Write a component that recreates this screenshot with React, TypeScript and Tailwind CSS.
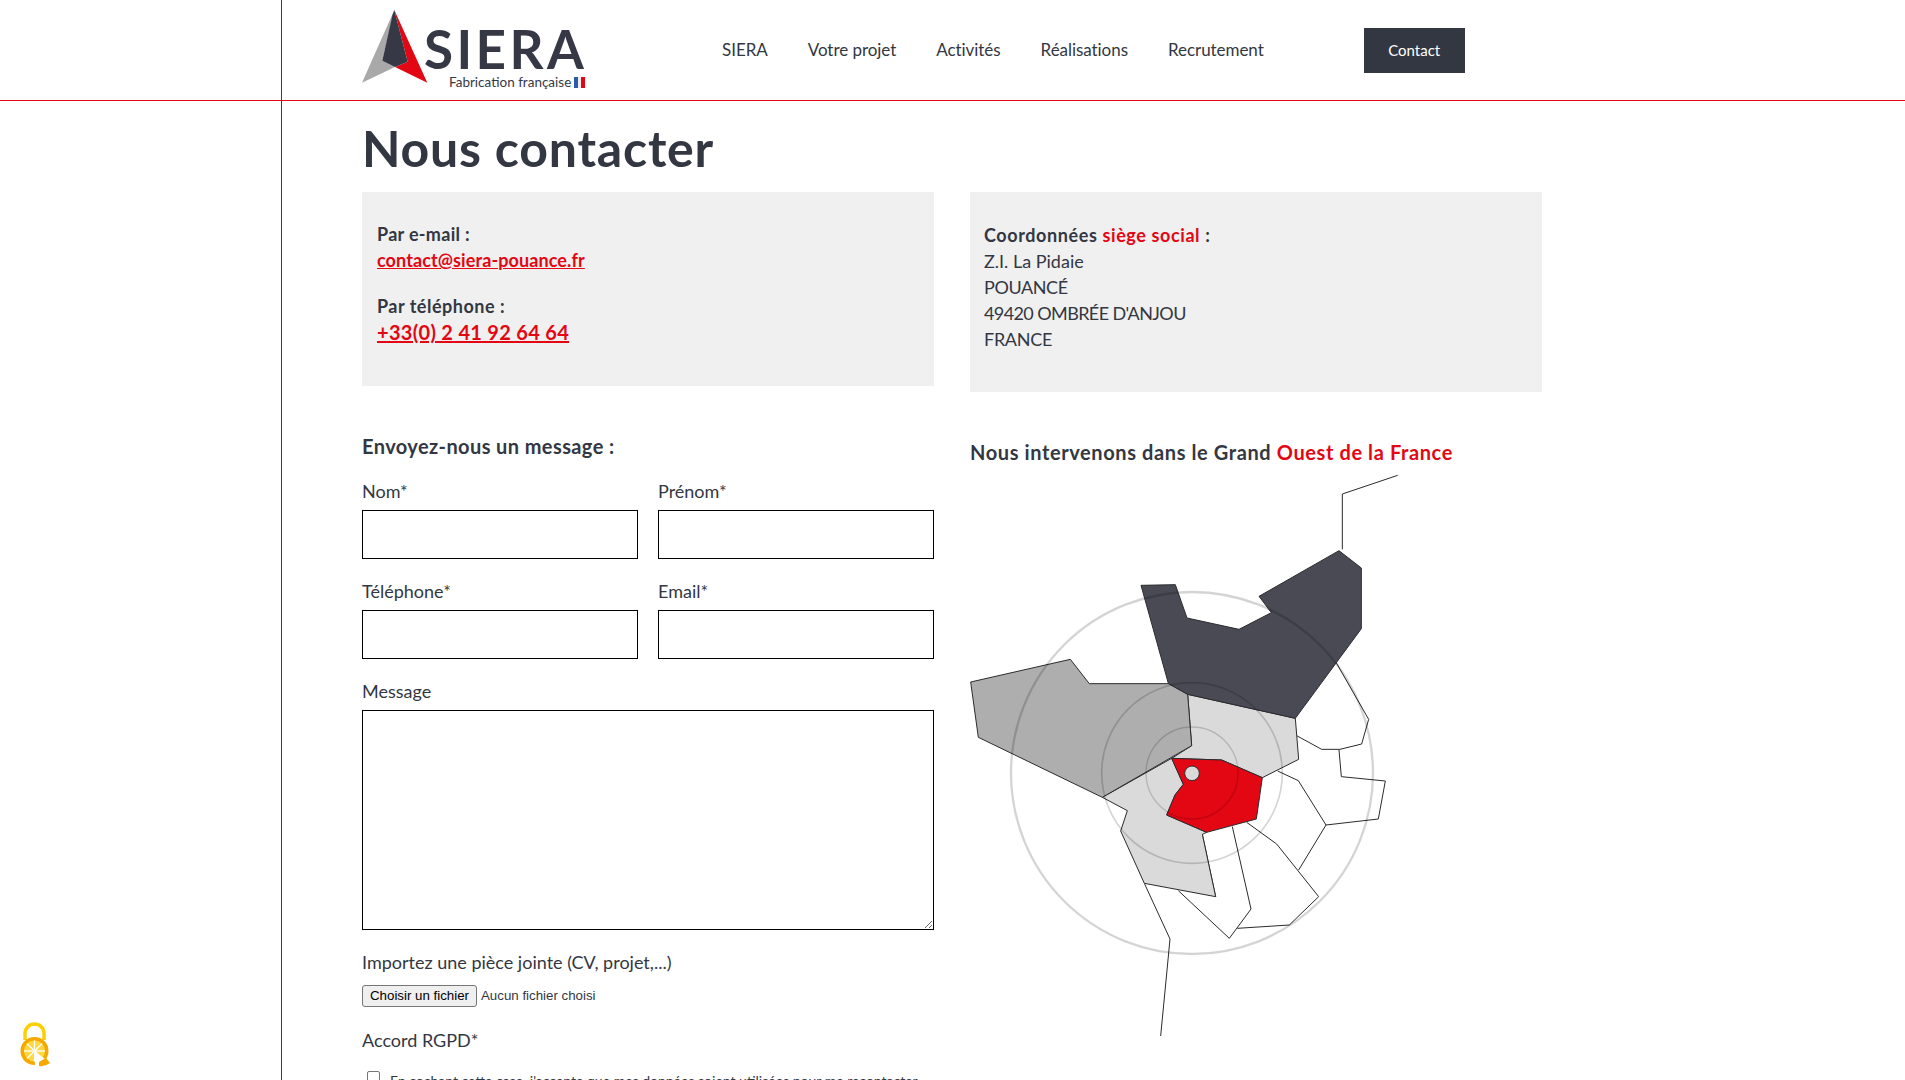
const font = "font-['Lato','Liberation_Sans',sans-serif]";

const inputCls = "block w-full border border-black bg-white";

function Logo() {
  return (
    <div className="relative h-[100px] w-[240px] shrink-0">
      <svg className="absolute left-0 top-0" width="70" height="90" viewBox="0 0 70 90">
        <polygon points="32.3,10 0,82.7 33,67 20.3,60.7" fill="#a9a9a9" />
        <polygon points="32.3,10 65.3,82.7 33,67 45.7,61.7" fill="#e30613" />
        <polygon points="30.5,15 20.3,60.7 33,67 45.7,61.7 32.3,10" fill="#363945" />
      </svg>
      <span className="absolute left-[62px] top-[29px] text-[53px] leading-[40px] font-bold tracking-[3.4px] text-[#363945]">SIERA</span>
      <span className="absolute left-[87px] top-[74px] text-[13.5px] leading-[17px] text-[#363945] whitespace-nowrap">Fabrication française</span>
      <span className="absolute left-[212px] top-[77px] flex h-[11px] w-[11px]">
        <span className="flex-1 bg-[#2a5caa]" />
        <span className="flex-1 bg-[#eeeeee]" />
        <span className="flex-1 bg-[#e30613]" />
      </span>
    </div>
  );
}

function Field({ label }: { label: string }) {
  return (
    <div className="flex-1">
      <label className="mb-[4px] block text-[18px] leading-[30px]">{label}</label>
      <input type="text" className={`${inputCls} h-[49px]`} />
    </div>
  );
}

const nav = ["SIERA", "Votre projet", "Activités", "Réalisations", "Recrutement"];

function FranceMap() {
  return (
    <svg className="block" width="440" height="580" viewBox="30 30 1320 1740" fill="none">
      <g stroke="#2b2b2f" strokeWidth="3">
        <polyline points="1127,605 1226,778 1205,852 1140,868 1085,868 1010,827" />
        <polyline points="1137,870 1144,950 1276,963 1255,1077 1098,1095 1015,962 953,933" />
        <polyline points="1098,1095 1016,1230" />
        <polyline points="860,1087 950,1152 1076,1310 988,1395 832,1405" />
        <polyline points="817,1100 873,1347 808,1435 655,1292" />
        <polyline points="727,1123 767,1310" />
        <polyline points="553,1270 630,1437 602,1728" />
        <polyline points="1147,268 1147,102 1313,46" />
        <polygon fill="#dadada" points="683,703 1006,775 1016,898 907,953 785,900 635,895 695,857" />
        <polygon fill="#dadada" points="635,895 670,973 645,1005 620,1065 740,1117 727,1123 767,1310 553,1270 482,1113 502,1052 427,1012" />
        <polygon fill="#aeaeae" points="32,666 331,598 388,671 625,671 683,703 695,857 427,1012 55,832" />
        <polygon fill="#4a4a55" points="543,376 646,374 681,474 837,508 934,458 897,409 1137,272 1204,324 1204,506 1006,775 683,703 625,670" />
        <polygon fill="#e30613" points="635,895 785,900 907,953 889,1077 740,1117 620,1065 645,1005 670,973" />
        <circle cx="696" cy="940" r="22" fill="#dadada" />
      </g>
      <g stroke="#000000" strokeOpacity="0.17">
        <circle cx="696" cy="939" r="543" strokeWidth="7" />
        <circle cx="696" cy="939" r="271" strokeWidth="5" />
        <circle cx="696" cy="939" r="138" strokeWidth="4" />
      </g>
    </svg>
  );
}

function LockBadge() {
  return (
    <svg className="absolute left-[19px] top-[1022px]" width="34" height="48" viewBox="0 0 34 48">
      <path d="M6 18 V11.5 a9.5 9.5 0 0 1 19 0 V18" fill="none" stroke="#fcd000" strokeWidth="3.5" />
      <circle cx="15.5" cy="29" r="14" fill="#f5a800" />
      <circle cx="15.5" cy="29" r="10.5" fill="#ffd740" />
      <g stroke="#ffffff" strokeWidth="1.3">
        <line x1="15.5" y1="18.5" x2="15.5" y2="39.5" />
        <line x1="5" y1="29" x2="26" y2="29" />
        <line x1="8" y1="21.5" x2="23" y2="36.5" />
        <line x1="23" y1="21.5" x2="8" y2="36.5" />
      </g>
      <polygon points="15.5,29 30,40 30,46 16,46" fill="#ffffff" />
      <path d="M20 40 L27 36 L31 41 Q26 45 20 44 Z" fill="#f5a800" />
    </svg>
  );
}

export default function App() {
  return (
    <div className={`relative h-screen overflow-hidden bg-white text-[#333742] ${font}`}>
      <div className="absolute left-[281px] top-0 h-full w-px bg-[#c5001a]" />
      <LockBadge />

      <header className="h-[101px] border-b border-[#e30613] pl-[362px] flex items-start">
        <Logo />
        <nav className="ml-[120px] mt-[36px] flex gap-[40px] text-[17px] leading-[28px] tracking-[-0.05px]">
          {nav.map((n) => (
            <a key={n} className="whitespace-nowrap">{n}</a>
          ))}
        </nav>
        <a className="ml-[100px] mt-[28px] flex h-[45px] w-[101px] items-center justify-center bg-[#333742] text-[15px] text-white">
          Contact
        </a>
      </header>

      <main className="pl-[362px]">
        <h1 className="pt-[19px] text-[50px] leading-[57px] font-bold tracking-[0.8px]">Nous contacter</h1>

        <div className="mt-[15px] flex items-start gap-[36px] w-[1180px]">
          <div className="w-[572px] shrink-0">
            <div className="h-[194px] bg-[#f0f0f0] px-[15px] pt-[29px] text-[18px] leading-[26px]">
              <p className="font-bold tracking-[0.3px]">Par e-mail :</p>
              <a className="font-bold tracking-[0.1px] text-[#e30613] underline">contact@siera-pouance.fr</a>
              <p className="mt-[20px] font-bold tracking-[0.5px]">Par téléphone :</p>
              <a className="text-[20px] font-bold tracking-[0.3px] text-[#e30613] underline">+33(0) 2 41 92 64 64</a>
            </div>

            <h2 className="mt-[46px] text-[20px] leading-[28px] font-bold tracking-[0.4px]">Envoyez-nous un message :</h2>
            <div className="mt-[16px] flex gap-[20px]">
              <Field label="Nom*" />
              <Field label="Prénom*" />
            </div>
            <div className="mt-[17px] flex gap-[20px]">
              <Field label="Téléphone*" />
              <Field label="Email*" />
            </div>
            <label className="mb-[4px] mt-[17px] block text-[18px] leading-[30px]">Message</label>
            <textarea className={`${inputCls} h-[220px]`} />
            <p className="mt-[17px] text-[18px] leading-[30px]">Importez une pièce jointe (CV, projet,...)</p>
            <div className="mt-[8px] flex items-center font-['Liberation_Sans',sans-serif] text-[13.3px] text-[#333742]">
              <span className="flex h-[22px] w-[115px] items-center justify-center rounded-[3px] border border-[#767676] bg-[#efefef] text-black">Choisir un fichier</span>
              <span className="ml-[4px]">Aucun fichier choisi</span>
            </div>
            <p className="mt-[18px] text-[18px] leading-[30px]">Accord RGPD*</p>
            <div className="mt-[16px] flex items-start">
              <input type="checkbox" className="ml-[5px] h-[13px] w-[13px] shrink-0 appearance-none rounded-[2px] border border-[#767676]" />
              <span className="ml-[10px] mt-[1px] whitespace-nowrap text-[14px] leading-[18px]">En cochant cette case, j'accepte que mes données soient utilisées pour me recontacter</span>
            </div>
          </div>

          <div className="flex-1">
            <div className="h-[200px] bg-[#f0f0f0] px-[14px] pt-[30px] text-[18px] leading-[26px]">
              <p className="font-bold tracking-[0.6px]">Coordonnées <span className="text-[#e30613]">siège social</span> :</p>
              <p>Z.I. La Pidaie</p>
              <p className="tracking-[-0.4px]">POUANCÉ</p>
              <p className="tracking-[-0.6px]">49420 OMBRÉE D'ANJOU</p>
              <p className="tracking-[-0.3px]">FRANCE</p>
            </div>
            <h2 className="mt-[46px] text-[20px] leading-[28px] font-bold tracking-[0.6px]">
              Nous intervenons dans le Grand <span className="text-[#e30613]">Ouest de la France</span>
            </h2>
            <div className="mt-[4px]">
              <FranceMap />
            </div>
          </div>
        </div>
      </main>
    </div>
  );
}
